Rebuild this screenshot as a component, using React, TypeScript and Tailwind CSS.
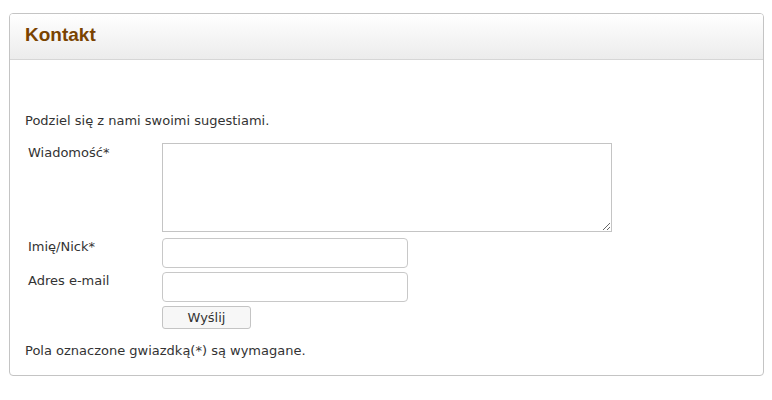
import React from "react";

const App: React.FC = () => {
  return (
    <div className="w-[772px] h-[400px] bg-white pt-[13px] pl-[9px] font-['DejaVu_Sans',sans-serif] text-[13px] text-[#333]">
      <div className="w-[755px] border border-[#c4c4c4] rounded-[4px] overflow-hidden">
        {/* Header */}
        <div className="h-[46px] border-b border-[#d6d6d6] bg-gradient-to-b from-white to-[#ececec] pl-[15px] pt-[10px]">
          <h1 className="font-['Liberation_Sans',sans-serif] font-bold text-[19px] text-[#7a4300] leading-[22px]">Kontakt</h1>
        </div>

        {/* Body */}
        <div className="pt-[53px] pb-[16px] pl-[15px]">
          <p className="leading-[16px]">Podziel się z nami swoimi sugestiami.</p>

          <div className="mt-[14px] flex flex-col gap-[4px]">
            <div className="flex">
              <label className="w-[137px] pl-[3px] pt-[2px] leading-[16px]">Wiadomość*</label>
              <textarea className="w-[450px] h-[89px] border border-[#c4c4c4] bg-white resize-y outline-none" />
            </div>
            <div className="flex mt-[2px]">
              <label className="w-[137px] pl-[3px] pt-[1px] leading-[16px]">Imię/Nick*</label>
              <input type="text" className="w-[246px] h-[30px] border border-[#c8c8c8] rounded-[4px] bg-white outline-none" />
            </div>
            <div className="flex">
              <label className="w-[137px] pl-[3px] pt-[1px] leading-[16px]">Adres e-mail</label>
              <input type="text" className="w-[246px] h-[30px] border border-[#c8c8c8] rounded-[4px] bg-white outline-none" />
            </div>
            <div className="flex">
              <div className="w-[137px]" />
              <button className="w-[89px] h-[23px] border border-[#c4c4c4] rounded-[3px] bg-[#f7f7f7] text-[#333] leading-[16px]">Wyślij</button>
            </div>
          </div>

          <p className="mt-[14px] leading-[16px]">Pola oznaczone gwiazdką(*) są wymagane.</p>
        </div>
      </div>
    </div>
  );
};

export default App;
